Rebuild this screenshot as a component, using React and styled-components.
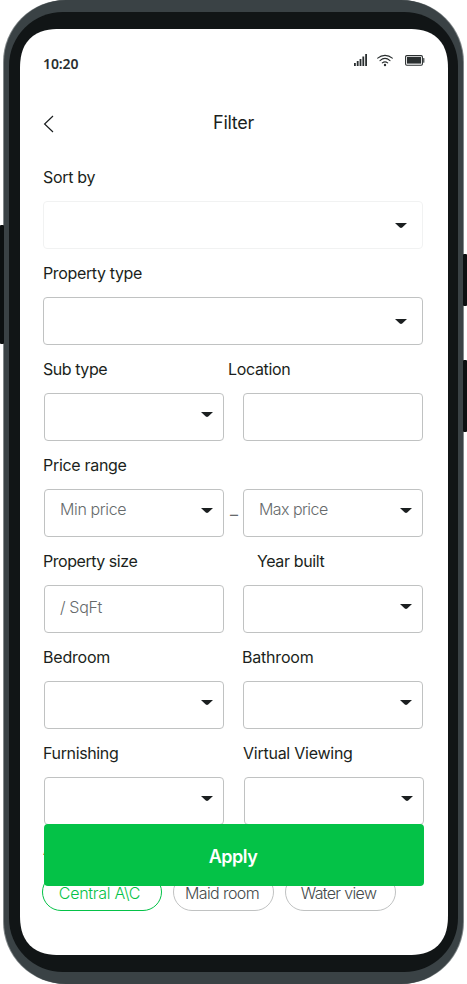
import React from "react";
import styled, { createGlobalStyle } from "styled-components";

const ink = "#1b1f20";
const muted = "#666a6b";
const border = "#c0c2c2";
const green = "#04c247";

const GlobalStyle = createGlobalStyle`
    * { box-sizing: border-box; }
    body {
        margin: 0;
        background: #fff;
        color: ${ink};
        font-family: Inter, "Liberation Sans", sans-serif;
    }
`

// ______ Phone frame ___________

const Stage = styled.div`
    position: relative;
    width: 467px;
    height: 984px;
    padding: 0 4px;
    overflow: hidden;
`
const SideButton = styled.span`
    position: absolute;
    z-index: 1;
    ${({ $side }) => $side}: 0;
    top: ${({ $top }) => $top}px;
    width: 4px;
    height: ${({ $height }) => $height}px;
    border-radius: 1px;
    background: #0c1011;
`
const Shell = styled.div`
    position: relative;
    height: 984px;
    padding: 12px 5px;
    border-radius: 62px;
    background: #3a4245;
    box-shadow: -1px 0 #83898b, 1px 0 #83898b;
`
const Bezel = styled.div`
    height: 960px;
    padding: 17px 10px 17px 11px;
    border-radius: 54px;
    background: #111516;
`
const Screen = styled.main`
    position: relative;
    height: 926px;
    padding: 0 24px 0 23px;
    border-radius: 40px;
    corner-shape: superellipse(1.3);
    background: #fff;
    overflow: hidden;
`

// ______ Header ___________

const StatusBar = styled.div`
    display: flex;
    justify-content: space-between;
    height: 62px;
    padding-top: 25px;
`
const Time = styled.span`
    font: 600 14px/20px "Noto Sans", sans-serif;
    color: #2a2f30;
    letter-spacing: -0.1px;
`
const StatusIcons = styled.svg`
    width: 71px;
    height: 14px;
    margin: -1px -1px 0 0;
`
const TitleBar = styled.header`
    display: grid;
    grid-template-columns: 20px 1fr 20px;
    align-items: center;
    height: 62px;
`
const BackIcon = styled.svg`
    width: 12px;
    height: 18px;
    margin-top: 3px;
`
const Title = styled.h1`
    margin: 1px 0 0;
    font-size: 18px;
    line-height: 24px;
    font-weight: 400;
    letter-spacing: -0.3px;
    text-align: center;
`

// ______ Form ___________

const Row = styled.div`
    display: flex;
    width: 381px;
    height: 96px;
    padding-left: ${({ $inset }) => $inset || 0}px;
`
const Field = styled.div`
    width: ${({ $wide }) => ($wide ? 380 : 180)}px;
`
const Gap = styled.div`
    width: ${({ $width }) => $width || 19}px;
    padding: 61px 0 0 6px;
    color: ${muted};
    font-size: 16px;
    line-height: 24px;
`
const Label = styled.div`
    height: 48px;
    margin-left: ${({ $shift }) => $shift || 0}px;
    font-size: 16px;
    line-height: 48px;
    letter-spacing: ${({ $spacing }) => $spacing || 0}px;
    white-space: nowrap;
`
const Control = styled.div`
    display: flex;
    justify-content: space-between;
    height: 48px;
    padding: ${({ $wide }) => ($wide ? "21px 15px 0 16px" : "18px 10px 0 15px")};
    border: 1px solid ${({ $faint }) => ($faint ? "#f1f2f2" : border)};
    border-radius: 4px;
`
const Placeholder = styled.span`
    margin-top: ${({ $top }) => $top}px;
    color: ${muted};
    font-size: 16px;
    line-height: 24px;
    font-weight: 300;
    letter-spacing: ${({ $spacing }) => $spacing || 0}px;
    white-space: nowrap;
`
const Caret = styled.span`
    width: 12px;
    height: 5px;
    margin-left: auto;
    background: ${ink};
    clip-path: polygon(0 0, 100% 0, 60% 90%, 50% 100%, 40% 90%);
`
const Chips = styled.div`
    display: flex;
    gap: 11px;
    margin-left: -1px;
`
const Chip = styled.span`
    width: ${({ $width }) => $width}px;
    height: 38px;
    padding-right: ${({ $nudge }) => $nudge}px;
    border: 1px solid ${({ $active }) => ($active ? green : border)};
    border-radius: 19px;
    color: ${({ $active }) => ($active ? green : "#454a4b")};
    font-size: 16px;
    line-height: 38px;
    font-weight: 300;
    letter-spacing: ${({ $spacing }) => $spacing || 0}px;
    text-align: center;
    white-space: nowrap;
`
const ApplyButton = styled.button`
    position: absolute;
    left: 24px;
    top: 795px;
    width: 380px;
    height: 62px;
    padding: 3px 2px 0 0;
    border: 0;
    border-radius: 4px;
    background: ${green};
    color: #fff;
    font: 600 18px/24px Inter, sans-serif;
    letter-spacing: -0.5px;
`

const rows = [
    { wide: true, fields: [{ label: "Sort by", spacing: -0.3, select: true, faint: true }] },
    { wide: true, fields: [{ label: "Property type", spacing: -0.36, select: true }] },
    {
        fields: [
            { label: "Sub type", spacing: -0.44, select: true, shift: -1 },
            { label: "Location", spacing: -0.33, shift: -15 },
        ],
    },
    {
        separator: "–",
        fields: [
            {
                label: "Price range", spacing: -0.3, select: true, shift: -1,
                placeholder: "Min price", placeholderSpacing: -0.38,
            },
            { label: "", select: true, placeholder: "Max price", placeholderSpacing: -0.56 },
        ],
    },
    {
        fields: [
            {
                label: "Property size", spacing: -0.46, shift: -1,
                placeholder: "/ SqFt", placeholderSpacing: -0.35, placeholderTop: -9,
            },
            { label: "Year built", spacing: -0.38, select: true, shift: 14 },
        ],
    },
    {
        fields: [
            { label: "Bedroom", spacing: -0.2, select: true, shift: -1 },
            { label: "Bathroom", spacing: -0.2, select: true, shift: -1 },
        ],
    },
    {
        gap: 20,
        fields: [
            { label: "Furnishing", spacing: -0.36, select: true, shift: -1 },
            { label: "Virtual Viewing", spacing: -0.25, select: true, shift: -1 },
        ],
    },
]

const FilterField = ({ field, wide }) => (
    <Field $wide={wide}>
        <Label $shift={field.shift} $spacing={field.spacing}>{field.label}</Label>
        <Control $wide={wide} $faint={field.faint}>
            {field.placeholder && (
                <Placeholder $top={field.placeholderTop || -11} $spacing={field.placeholderSpacing}>
                    {field.placeholder}
                </Placeholder>
            )}
            {field.select && <Caret />}
        </Control>
    </Field>
)

const Status = () => (
    <StatusBar>
        <Time>10:20</Time>
        <StatusIcons viewBox="0 0 71 14" fill="none">
            <g fill="#2a2f30">
                <rect x="0" y="10" width="1.8" height="3" />
                <rect x="2.8" y="8" width="1.8" height="5" />
                <rect x="5.6" y="6" width="1.8" height="7" />
                <rect x="8.4" y="3.5" width="1.8" height="9.5" />
                <rect x="11.2" y="1" width="1.8" height="12" />
                <circle cx="31" cy="12" r="1.2" />
                <rect x="53" y="4" width="14" height="6.6" />
            </g>
            <g stroke="#2a2f30" strokeWidth="1.1" strokeLinecap="round">
                <path d="M23.7 5.2C28 1.4 34 1.4 38.3 5.2" />
                <path d="M26 7.6C29 5 33 5 36 7.6" />
                <path d="M28.3 9.9C30 8.6 32 8.6 33.7 9.9" />
                <rect x="51.6" y="2.6" width="16.8" height="9.6" rx="1.2" />
                <path d="M69.8 5.5V9.3" />
            </g>
        </StatusIcons>
    </StatusBar>
)

const App = () => (
    <Stage>
        <GlobalStyle />
        <SideButton $side="left" $top={225} $height={119} />
        <SideButton $side="right" $top={254} $height={52} />
        <SideButton $side="right" $top={360} $height={72} />
        <Shell>
            <Bezel>
                <Screen>
                    <Status />
                    <TitleBar>
                        <BackIcon viewBox="0 0 12 18" fill="none" stroke={ink} strokeWidth="1.2">
                            <path d="M10 1L1.6 9L10 17" />
                        </BackIcon>
                        <Title>Filter</Title>
                    </TitleBar>
                    {rows.map((row, i) => (
                        <Row key={i} $inset={row.wide ? 0 : 1}>
                            <FilterField field={row.fields[0]} wide={row.wide} />
                            {!row.wide && <Gap $width={row.gap}>{row.separator}</Gap>}
                            {!row.wide && <FilterField field={row.fields[1]} />}
                        </Row>
                    ))}
                    <Label>Amenities</Label>
                    <Chips>
                        <Chip $width={120} $nudge={5} $spacing={-0.27} $active>Central A\C</Chip>
                        <Chip $width={101} $nudge={3} $spacing={-0.6}>Maid room</Chip>
                        <Chip $width={111} $nudge={4} $spacing={-0.66}>Water view</Chip>
                    </Chips>
                    <ApplyButton>Apply</ApplyButton>
                </Screen>
            </Bezel>
        </Shell>
    </Stage>
)

export default App
